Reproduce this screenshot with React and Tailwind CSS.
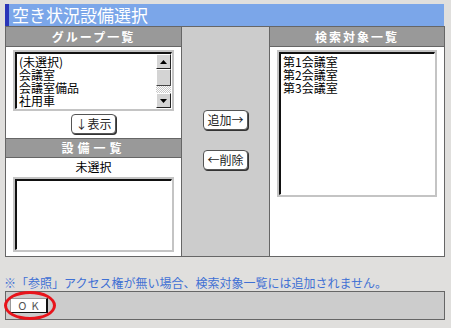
import React from "react";

const FONT = { fontFamily: '"Noto Sans CJK JP", "Noto Sans", sans-serif' };

function Header({ children, className = "" }) {
  return (
    <div className={`h-[20px] bg-[#999999] text-white text-[12px] font-bold flex items-center justify-center tracking-[2px] ${className}`}>
      {children}
    </div>
  );
}

function Sunken({ className = "", children }) {
  return (
    <div className={`border-2 border-[#c4c4c4] ${className}`}>
      <div className="h-full border-t-2 border-l-2 border-[#111] border-r border-b border-r-white border-b-white bg-white flex overflow-hidden">
        {children}
      </div>
    </div>
  );
}

function Btn({ children }) {
  return (
    <button className="h-[20px] px-[3px] rounded-[4px] bg-white border border-[#555] shadow-[1px_1px_0_#333] text-[12px] leading-none text-[#222]">
      {children}
    </button>
  );
}

function Arrow({ up }) {
  return (
    <div className="w-[15px] h-[15px] bg-[#d4d4d4] border border-t-white border-l-white border-r-[#222] border-b-[#222] flex items-center justify-center">
      <svg width="7" height="4" viewBox="0 0 7 4">
        {up ? <polygon points="3.5,0 7,4 0,4" fill="#000" /> : <polygon points="0,0 7,0 3.5,4" fill="#000" />}
      </svg>
    </div>
  );
}

export default function App() {
  const groups = ["(未選択)", "会議室", "会議室備品", "社用車"];
  const targets = ["第1会議室", "第2会議室", "第3会議室"];
  return (
    <div className="w-[451px] h-[328px] bg-[#e0dfdd] pt-[4px] px-[5px] text-black" style={FONT}>
      <div className="w-[439px] h-[22px] bg-[#7ba6e9] border-l-[4px] border-[#2a35b8] text-white text-[17px] leading-[22px] pl-[3px]">
        空き状況設備選択
      </div>

      <div className="w-[440px] h-[231px] border border-[#666] flex">
        {/* left column */}
        <div className="w-[176px] bg-white border-r border-[#666] flex flex-col">
          <Header className="border-b border-[#666]">グループ一覧</Header>
          <Sunken className="mx-[7px] mt-[3px] h-[61px]">
            <div className="flex-1 text-[12px] leading-[14px] pl-[2px] pt-px">
              {groups.map((g) => (
                <div key={g} className="h-[13px] leading-[13px]">{g}</div>
              ))}
            </div>
            <div className="w-[15px] flex flex-col">
              <Arrow up />
              <div className="h-[17px] bg-[#d4d4d4] border border-t-white border-l-white border-r-[#444] border-b-[#444]" />
              <div className="flex-1 bg-[repeating-conic-gradient(#c8c8c8_0_25%,#ffffff_0_50%)] bg-[length:2px_2px]" />
              <Arrow />
            </div>
          </Sunken>
          <div className="flex justify-center mt-[3px]">
            <Btn>↓表示</Btn>
          </div>
          <Header className="mt-[4px] border-y border-[#666] tracking-[4px]">設備一覧</Header>
          <div className="text-center text-[12px] leading-[16px] mt-[1px]">未選択</div>
          <Sunken className="mx-[7px] mt-[2px] h-[75px]">
            <div className="flex-1" />
          </Sunken>
        </div>

        {/* middle column */}
        <div className="w-[87px] bg-[#cccccc] flex flex-col items-center pt-[83px] gap-[20px]">
          <Btn>追加→</Btn>
          <Btn>←削除</Btn>
        </div>

        {/* right column */}
        <div className="flex-1 bg-white border-l border-[#666] flex flex-col">
          <Header className="border-b border-[#666]">検索対象一覧</Header>
          <Sunken className="mx-[7px] mt-[3px] h-[147px]">
            <div className="flex-1 text-[12px] pl-[2px] pt-px">
              {targets.map((t) => (
                <div key={t} className="h-[13px] leading-[13px]">{t}</div>
              ))}
            </div>
          </Sunken>
        </div>
      </div>

      <div className="mt-[19px] text-[12px] leading-[14px] text-[#3f70d4] -ml-[1px]">
        ※「参照」アクセス権が無い場合、検索対象一覧には追加されません。
      </div>

      <div className="relative w-[440px] h-[29px] mt-[1px] bg-[#cccccc] border border-[#666] flex items-center pl-[4px]">
        <button className="w-[38px] h-[15px] bg-white border border-[#999] border-r-2 border-r-[#111] border-b-[#111] text-[11px] leading-none text-[#555] tracking-[5px] pl-[5px]">
          OK
        </button>
        <div className="absolute left-[-2px] top-[-1px] w-[52px] h-[29px] rounded-[50%] border-[3px] border-[#e8141b] pointer-events-none" />
      </div>
    </div>
  );
}
